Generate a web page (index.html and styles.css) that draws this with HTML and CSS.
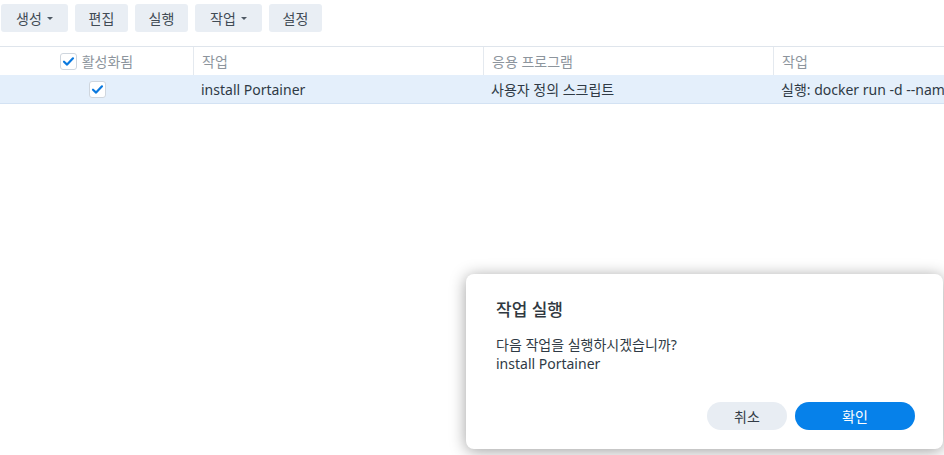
FILE: index.html
```html
<!DOCTYPE html>
<html lang="ko">
<head>
<meta charset="utf-8">
<title>작업 스케줄러</title>
<link rel="stylesheet" href="styles.css">
</head>
<body>
<div class="toolbar">
  <button class="tb-btn wide">생성<span class="caret"></span></button>
  <button class="tb-btn">편집</button>
  <button class="tb-btn">실행</button>
  <button class="tb-btn wide">작업<span class="caret"></span></button>
  <button class="tb-btn">설정</button>
</div>
<div class="grid">
  <div class="row head">
    <div class="cell c1"><span class="cb"><svg viewBox="0 0 16 16"><path d="M3.2 8.2 L6.5 11.3 L12.8 4.6" /></svg></span><span>활성화됨</span></div>
    <div class="cell">작업</div>
    <div class="cell">응용 프로그램</div>
    <div class="cell">작업</div>
  </div>
  <div class="row data">
    <div class="cell c1"><span class="cb"><svg viewBox="0 0 16 16"><path d="M3.2 8.2 L6.5 11.3 L12.8 4.6" /></svg></span></div>
    <div class="cell">install Portainer</div>
    <div class="cell">사용자 정의 스크립트</div>
    <div class="cell">실행: docker run -d --name=portainer</div>
  </div>
</div>
<div class="dialog">
  <div class="dlg-title">작업 실행</div>
  <div class="dlg-body">다음 작업을 실행하시겠습니까?<br>install Portainer</div>
  <div class="dlg-actions">
    <button class="btn cancel">취소</button>
    <button class="btn ok">확인</button>
  </div>
</div>
</body>
</html>
```
FILE: styles.css
```css
html, body {
  margin: 0;
  padding: 0;
  background: #ffffff;
  width: 944px;
  height: 455px;
  overflow: hidden;
  font-family: "Noto Sans", "Noto Sans CJK KR", sans-serif;
  font-size: 14px;
  color: #2f3a45;
}
body { position: relative; }

.toolbar {
  display: flex;
  gap: 7px;
  padding: 4px 0 0 1px;
}
.tb-btn {
  height: 28px;
  width: 53px;
  padding: 0;
  border: none;
  border-radius: 3px;
  background: #e9eef4;
  color: #414b55;
  font-family: inherit;
  font-size: 14px;
  display: flex;
  align-items: center;
  justify-content: center;
}
.tb-btn.wide { width: 67px; }
.caret {
  display: inline-block;
  width: 0;
  height: 0;
  margin-left: 5px;
  margin-top: 1px;
  border-left: 3px solid transparent;
  border-right: 3px solid transparent;
  border-top: 3px solid #4f5964;
}

.grid {
  margin-top: 14px;
  border-top: 1px solid #dfe5ec;
}
.row {
  display: grid;
  grid-template-columns: 193px 290px 290px 1fr;
  height: 28px;
  white-space: nowrap;
  overflow: hidden;
}
.row.data {
  background: #e4effb;
  border-bottom: 1px solid #d3e2f3;
}
.cell {
  display: flex;
  align-items: center;
  padding: 0 8px;
  overflow: hidden;
}
.head .cell {
  color: #8d959d;
  border-left: 1px solid #e4e9ef;
}
.head .cell:first-child { border-left: none; }
.cell.c1 {
  justify-content: center;
  gap: 5px;
  padding: 0;
}
.cb {
  width: 15px;
  height: 15px;
  border: 1px solid #cfd6de;
  border-radius: 3px;
  background: #ffffff;
  display: inline-flex;
  align-items: center;
  justify-content: center;
}
.cb svg {
  width: 15px;
  height: 15px;
}
.cb path {
  fill: none;
  stroke: #0a79df;
  stroke-width: 2.3;
  stroke-linecap: round;
  stroke-linejoin: round;
}
.data .c1 .cb { margin-left: 1px; }

.dialog {
  position: absolute;
  left: 466px;
  top: 274px;
  width: 477px;
  height: 175px;
  box-sizing: border-box;
  background: #ffffff;
  border-radius: 8px;
  box-shadow: 0 2px 16px rgba(0, 0, 0, 0.38);
  padding: 23px 28px 19px 30px;
  display: flex;
  flex-direction: column;
}
.dlg-title {
  font-size: 17px;
  line-height: 25px;
  font-weight: 500;
  color: #303840;
  margin-bottom: 13px;
}
.dlg-body {
  line-height: 19px;
  color: #2f3a45;
}
.dlg-actions {
  margin-top: auto;
  display: flex;
  justify-content: flex-end;
  gap: 8px;
}
.btn {
  height: 28px;
  border: none;
  border-radius: 14px;
  font-family: inherit;
  font-size: 14px;
}
.btn.cancel {
  width: 80px;
  background: #e8edf3;
  color: #333c46;
}
.btn.ok {
  width: 120px;
  background: #0681ea;
  color: #ffffff;
}
```
